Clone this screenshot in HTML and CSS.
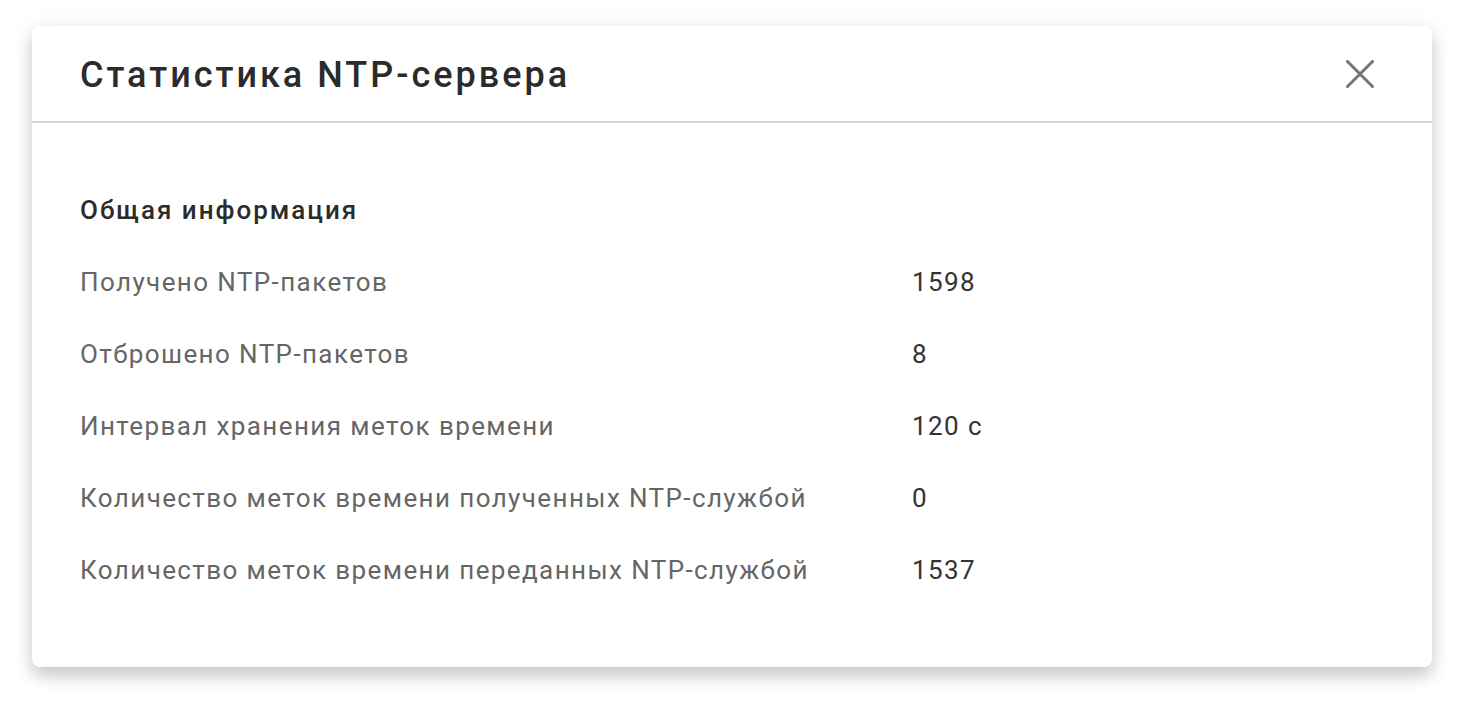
FILE: index.html
```html
<!DOCTYPE html>
<html>
<head>
  <meta charset="utf-8">
  <link rel="stylesheet" href="styles.css">
</head>
<body>
  <div class="dialog">
    <div class="dialog-header">
      <div class="dialog-title">Статистика NTP-сервера</div>
      <button class="close-btn" title="Закрыть">
        <svg width="28" height="28" viewBox="0 0 28 28">
          <path d="M1.5 1.5 L26.5 26.5 M26.5 1.5 L1.5 26.5" stroke="#757575" stroke-width="3" stroke-linecap="round" fill="none"/>
        </svg>
      </button>
    </div>

    <div class="dialog-body">
      <div class="section-title">Общая информация</div>
      <div class="stats-table">
        <div class="stat-label">Получено NTP-пакетов</div>
        <div class="stat-value">1598</div>
        <div class="stat-label">Отброшено NTP-пакетов</div>
        <div class="stat-value">8</div>
        <div class="stat-label">Интервал хранения меток времени</div>
        <div class="stat-value">120 с</div>
        <div class="stat-label">Количество меток времени полученных NTP-службой</div>
        <div class="stat-value">0</div>
        <div class="stat-label">Количество меток времени переданных NTP-службой</div>
        <div class="stat-value">1537</div>
      </div>
    </div>
  </div>
</body>
</html>
```

FILE: styles.css
```css
* {
  margin: 0;
  padding: 0;
  box-sizing: border-box;
}

body {
  width: 1464px;
  height: 706px;
  padding: 26px 32px 0;
  background: #fff;
  font-family: Roboto, "Noto Sans", sans-serif;
  color: #333;
  overflow: hidden;
}

.dialog {
  height: 641px;
  background: #fff;
  border-radius: 8px;
  box-shadow: 0 10px 16px rgba(0,0,0,0.18), 0 0 24px rgba(0,0,0,0.07);
}

.dialog-header {
  height: 97px;
  display: flex;
  align-items: center;
  justify-content: space-between;
  padding: 0 48px 0 48px;
  border-bottom: 2px solid #d6d6d6;
}

.dialog-title {
  font-size: 36px;
  font-weight: 500;
  letter-spacing: 3px;
  color: #2b2b2b;
  margin-top: 2px;
}

.close-btn {
  width: 48px;
  height: 48px;
  border: none;
  background: none;
  display: flex;
  align-items: center;
  justify-content: center;
  cursor: pointer;
}

.dialog-body {
  padding: 51px 48px 0;
}

.section-title {
  height: 72px;
  line-height: 72px;
  font-size: 26px;
  font-weight: 500;
  letter-spacing: 2px;
  color: #2b2b2b;
}

.stats-table {
  display: grid;
  grid-template-columns: 832px 1fr;
  grid-auto-rows: 72px;
  align-items: center;
}

.stat-label {
  font-size: 26px;
  letter-spacing: 1.4px;
  color: #666;
}

.stat-value {
  font-size: 26px;
  letter-spacing: 1.4px;
  color: #333;
}
```
